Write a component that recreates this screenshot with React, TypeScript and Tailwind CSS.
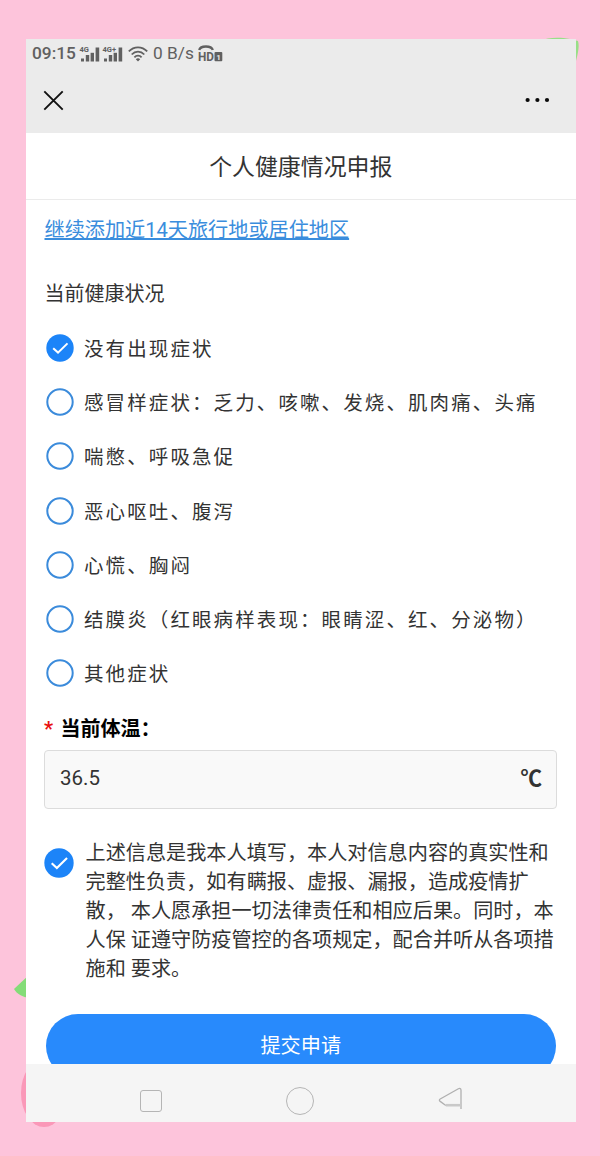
import React from "react";

const SYMPTOMS = [
  "没有出现症状",
  "感冒样症状：乏力、咳嗽、发烧、肌肉痛、头痛",
  "喘憋、呼吸急促",
  "恶心呕吐、腹泻",
  "心慌、胸闷",
  "结膜炎（红眼病样表现：眼睛涩、红、分泌物）",
  "其他症状",
];

const AGREEMENT = [
  "上述信息是我本人填写，本人对信息内容的真实性和",
  "完整性负责，如有瞒报、虚报、漏报，造成疫情扩",
  "散， 本人愿承担一切法律责任和相应后果。同时，本",
  "人保 证遵守防疫管控的各项规定，配合并听从各项措",
  "施和 要求。",
];

export default function App() {
  return (
    <div className="relative h-[1156px] w-[600px] overflow-hidden bg-[#fdc4db] pt-[39px] pl-[26px] font-[Roboto,'Noto_Sans_CJK_SC',sans-serif] text-[#333]">
      <Decorations />
      <div className="relative flex h-[1083px] w-[549.5px] flex-col overflow-hidden bg-white">
        <header className="h-[94px] shrink-0 bg-[#ebebeb]">
          <StatusBar />
          <div className="flex h-[64px] items-center justify-between pr-[26px] pl-[17px]">
            <svg width="21" height="21" viewBox="0 0 21 21" stroke="#111" strokeWidth="1.9">
              <path d="M1.3 1.3 19.7 19.7M19.7 1.3 1.3 19.7" />
            </svg>
            <svg width="25" height="6" viewBox="0 0 25 6" fill="#0a0a0a">
              <circle cx="2.6" cy="3" r="2.1" />
              <circle cx="12.4" cy="3" r="2.1" />
              <circle cx="22" cy="3" r="2.1" />
            </svg>
          </div>
        </header>

        <h1 className="flex h-[67px] shrink-0 items-center justify-center border-b border-[#ebebeb] pt-[4px] text-[22.9px] leading-none">
          个人健康情况申报
        </h1>

        <main className="flex min-h-0 flex-1 flex-col overflow-hidden pl-[18px]">
          <a className="mt-[15px] ml-[.5px] h-[30px] self-start text-[20.15px] leading-[30px] whitespace-nowrap text-[#3a8ddd] underline decoration-[1.5px] underline-offset-[1px]">
            继续添加近14天旅行地或居住地区
          </a>
          <h2 className="mt-[34px] ml-[.5px] h-[30px] text-[20px] leading-[30px]">当前健康状况</h2>

          <ul className="mt-[12px]">
            {SYMPTOMS.map((label, idx) => (
              <li key={label} className="flex h-[54.2px] items-center gap-[10.5px] pl-[1.5px]">
                {idx === 0 ? <Check size={28} /> : <Ring />}
                <span className="pt-[3px] text-[19.5px] tracking-[2.1px] whitespace-nowrap">{label}</span>
              </li>
            ))}
          </ul>

          <div className="mt-[14px] flex h-[30px] shrink-0 items-center text-[20px] font-bold text-black">
            <span className="w-[16.5px] text-[#e81010]">*</span>
            当前体温：
          </div>
          <div className="mt-[6px] flex h-[59px] w-[513px] shrink-0 items-center justify-between rounded-[4px] border-[1.5px] border-[#dcdcdc] bg-[#f9f9f9] pr-[14px] pb-[3px] pl-[15px]">
            <span className="text-[20.5px]">36.5</span>
            <span className="text-[21.5px] leading-none font-bold">℃</span>
          </div>

          <div className="mt-[30px] flex shrink-0 gap-[11.5px]">
            <div className="pt-[9px]">
              <Check size={30} />
            </div>
            <p className="text-[20.15px] leading-[29px] whitespace-nowrap">
              {AGREEMENT.map((line) => (
                <span key={line} className="block">
                  {line}
                </span>
              ))}
            </p>
          </div>

          <button className="mt-[30px] ml-[1.5px] h-[64px] w-[510.5px] shrink-0 rounded-full bg-[#288afc] text-[20.15px] text-white">
            提交申请
          </button>
        </main>

        <NavBar />
      </div>
    </div>
  );
}

function Ring() {
  return (
    <svg width="28" height="28" viewBox="0 0 28 28" className="shrink-0">
      <circle cx="14" cy="14" r="12.7" fill="none" stroke="#3b8bdb" strokeWidth="2" />
    </svg>
  );
}

function Check({ size }: { size: number }) {
  return (
    <svg width={size} height={size} viewBox="0 0 28 28" className="shrink-0">
      <circle cx="14" cy="14" r="13.7" fill="#1c84f8" />
      <path d="M7.2 14.2 12 18.6 21.5 9.4" fill="none" stroke="#fff" strokeWidth="2" />
    </svg>
  );
}

function Signal({ label }: { label: string }) {
  return (
    <svg className="overflow-visible" width="20" height="16" viewBox="0 0 20 16" fill="#606060">
      <text x="-.5" y="6.2" fontSize="7.5" fontWeight="700">
        {label}
      </text>
      <rect x="1" y="12.5" width="3" height="3" />
      <rect x="5.8" y="9" width="3.4" height="6.5" />
      <rect x="10.6" y="6.8" width="3.4" height="8.7" />
      <rect x="15.6" y="1.5" width="3.6" height="14" />
    </svg>
  );
}

function StatusBar() {
  return (
    <div className="flex h-[29px] items-center pl-[6px] text-[#606060]">
      <span className="w-[48px] text-[17.3px] font-medium">09:15</span>
      <Signal label="4G" />
      <span className="w-[3px]" />
      <Signal label="4G+" />
      <svg className="ml-[5px]" width="20" height="16" viewBox="0 0 20 16" fill="none" stroke="#606060" strokeWidth="1.8">
        <path d="M.8 5.4C6-.1 14-.1 19.2 5.4M3.7 8.5c3.6-3.8 9-3.8 12.6 0M6.4 11.3c2-2.2 5.2-2.2 7.2 0" />
        <path d="M7.8 13.2 10 15.5l2.2-2.3c-1.2-1.2-3.2-1.2-4.4 0z" fill="#606060" stroke="none" />
      </svg>
      <span className="ml-[5px] w-[45px] text-[17.3px] whitespace-nowrap">0 B/s</span>
      <svg className="overflow-visible" width="25" height="18" viewBox="0 0 25 18" fill="#606060">
        <path d="M1.2 5C2.5.3 13.3.3 14.8 5" fill="none" stroke="#606060" strokeWidth="2.4" />
        <text x="0" y="16.2" fontSize="13" fontWeight="700" textLength="16" lengthAdjust="spacingAndGlyphs">
          HD
        </text>
        <rect x="16.5" y="7" width="7.8" height="9.2" rx="1" />
        <text x="18.2" y="14.5" fontSize="8" fontWeight="700" fill="#ebebeb">
          1
        </text>
      </svg>
    </div>
  );
}

function NavBar() {
  return (
    <nav className="flex h-[58px] shrink-0 items-center bg-[#f5f5f5] pt-[15px] pl-[114px]">
      <span className="size-[22px] rounded-[3px] border-[1.5px] border-[#b5b5b5]" />
      <span className="ml-[124px] size-[28px] rounded-full border-[1.5px] border-[#b5b5b5]" />
      <svg className="-mt-[4px] ml-[124px]" width="25" height="23" viewBox="0 0 25 23" fill="none" stroke="#b0b0b0" strokeWidth="1.3">
        <path d="M23 22V3.2C23 1.6 21.8 1 20.4 1.8L2.2 12c-1.1.7-1.1 1.7 0 2.4l5.6 4.2" />
        <path d="M7.8 18.2H23" stroke="#c9c9c9" strokeWidth="2.6" />
      </svg>
    </nav>
  );
}

// Fruit and leaf shapes peeking out from behind the phone
function Decorations() {
  return (
    <svg className="absolute top-0 left-0" width="600" height="1156" viewBox="0 0 600 1156">
      <path d="M540 41c8-4 20-4 30-2l8 2c2 6-1 16-3 24h-20z" fill="#98df87" />
      <path d="M14 989 30 974v24c-8-1-13-4-16-9z" fill="#84dc78" />
      <ellipse cx="44" cy="1093" rx="23" ry="34" fill="#fa98b8" />
    </svg>
  );
}
